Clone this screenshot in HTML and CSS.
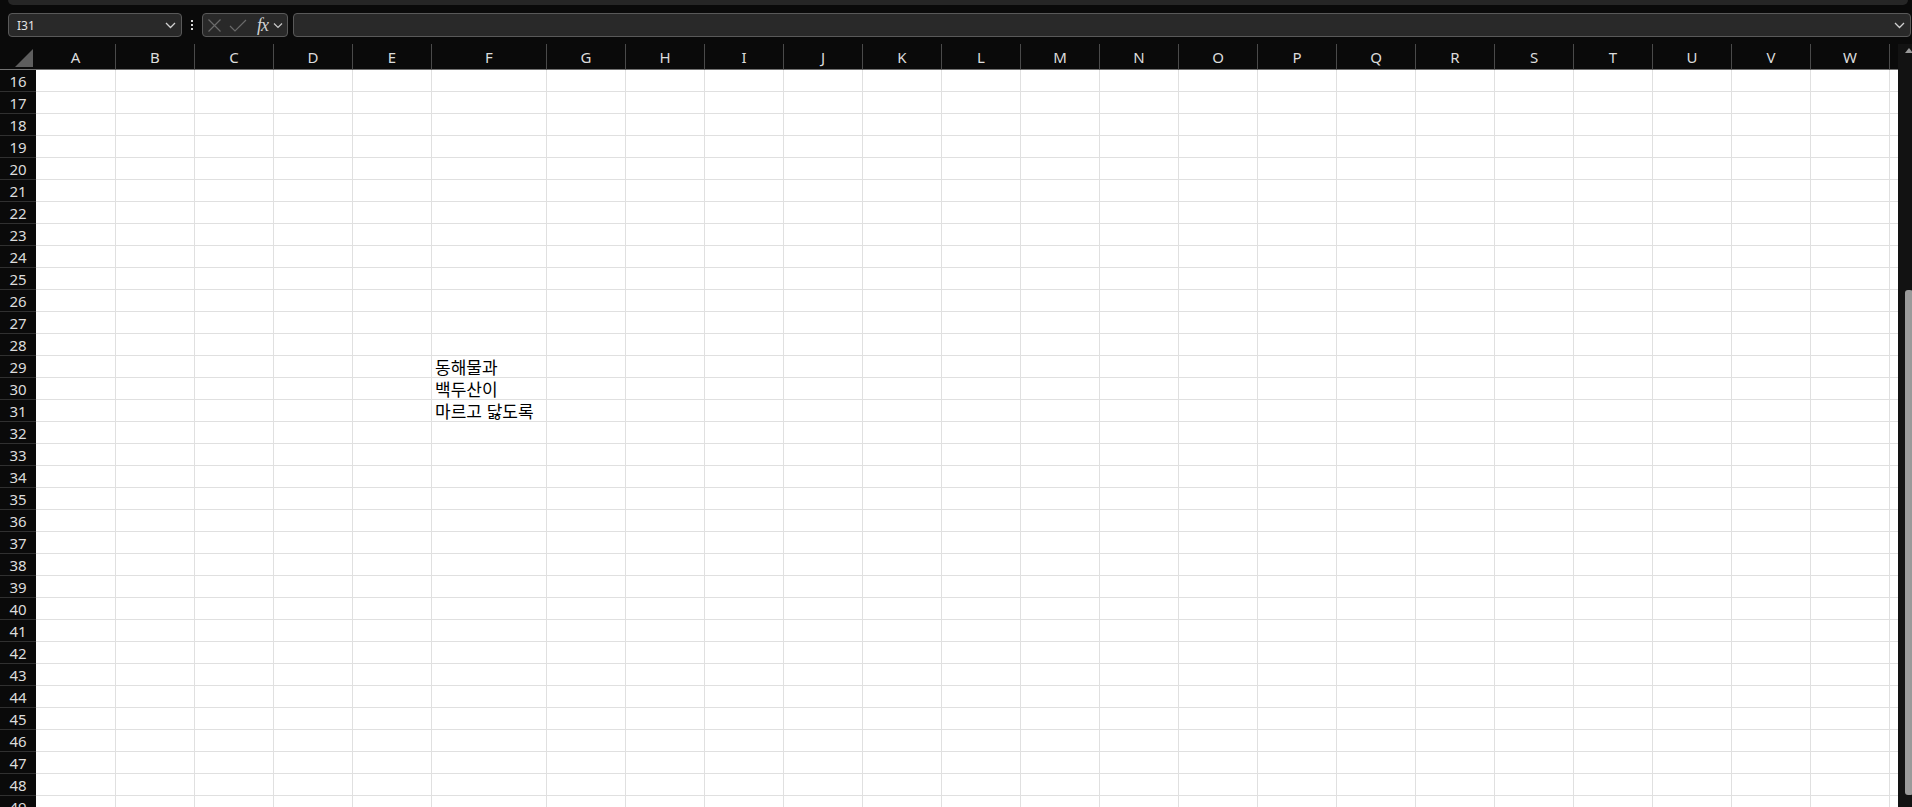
FILE: index.html
```html
<!DOCTYPE html>
<html lang="ko">
<head>
    <meta charset="UTF-8">
    <title>Excel - Sheet1</title>
    <link rel="stylesheet" href="styles.css">
</head>
<body>

    <div class="ribbon-edge"></div>

    <div class="toolbar">
        <div class="name-box">
            <span>I31</span>
            <svg class="chev" width="11" height="7" viewBox="0 0 11 7"><path d="M1 1 L5.5 5.5 L10 1" fill="none" stroke="#d0d0d0" stroke-width="1.3"/></svg>
        </div>
        <div class="dots"><i></i><i></i><i></i></div>
        <div class="fx-box">
            <svg width="15" height="15" viewBox="0 0 15 15"><path d="M1.5 1.5 L13.5 13.5 M13.5 1.5 L1.5 13.5" stroke="#6a6a6a" stroke-width="1.2"/></svg>
            <svg width="18" height="15" viewBox="0 0 18 15"><path d="M1 8 L6 13 L17 2" fill="none" stroke="#6a6a6a" stroke-width="1.2"/></svg>
            <span class="fx">fx</span>
            <svg class="chev fx-chev" width="10" height="7" viewBox="0 0 10 7"><path d="M1 1.5 L5 5.5 L9 1.5" fill="none" stroke="#c8c8c8" stroke-width="1.2"/></svg>
        </div>
        <div class="formula-bar">
            <svg class="chev" width="11" height="7" viewBox="0 0 11 7"><path d="M1 1 L5.5 5.5 L10 1" fill="none" stroke="#d0d0d0" stroke-width="1.3"/></svg>
        </div>
    </div>

    <main class="workspace">
        <div class="sheet" id="sheet"></div>
        <div class="vscroll">
            <div class="arrow-up"></div>
            <div class="thumb"></div>
        </div>
    </main>

    <script>
        // last column (X) is only partly visible, its letter falls off screen
        const cols = ['A','B','C','D','E','F','G','H','I','J','K','L','M','N','O','P','Q','R','S','T','U','V','W',''];
        const values = { 'F29': '동해물과', 'F30': '백두산이', 'F31': '마르고 닳도록' };
        const sheet = document.getElementById('sheet');

        let html = '<div class="corner"><span class="tri"></span></div>';
        cols.forEach(c => { html += `<div class="col-head">${c}</div>`; });

        for (let r = 16; r <= 49; r++) {
            html += `<div class="row-head">${r}</div>`;
            cols.forEach(c => {
                let v = values[c + r] || '';
                html += `<div class="cell">${v}</div>`;
            });
        }
        sheet.innerHTML = html;
    </script>

</body>
</html>
```

FILE: styles.css
```css
body {
    margin: 0;
    height: 100vh;
    overflow: hidden;
    background-color: #0a0a0a;
    font-family: "Noto Sans", "Noto Sans CJK KR", sans-serif;
    display: flex;
    flex-direction: column;
}

.ribbon-edge {
    height: 5px;
    margin: 0 4px 0 8px;
    background-color: #262626;
    border-radius: 0 0 6px 6px;
}

.toolbar {
    height: 39px;
    box-sizing: border-box;
    padding: 8px 1px 0 8px;
    display: flex;
    align-items: flex-start;
}

.name-box,
.fx-box,
.formula-bar {
    height: 24px;
    box-sizing: border-box;
    background-color: #292929;
    border: 1px solid #595959;
    border-radius: 4px;
    display: flex;
    align-items: center;
}

.name-box {
    width: 174px;
    padding: 0 5px 0 8px;
    justify-content: space-between;
    color: #e4e4e4;
    font-size: 12px;
}

.dots {
    width: 2px;
    margin: 7px 9px 0 9px;
    display: flex;
    flex-direction: column;
    gap: 2px;
}

.dots i {
    width: 2px;
    height: 2px;
    background-color: #d8d8d8;
}

.fx-box {
    width: 86px;
    padding: 0 2px 0 4px;
    gap: 7px;
}

.fx {
    font-family: "Liberation Serif", serif;
    font-style: italic;
    font-size: 18px;
    color: #d2d2d2;
    margin-left: 3px;
    letter-spacing: -1px;
    line-height: 20px;
}

.fx-chev {
    margin-left: -2px;
}

.formula-bar {
    flex: 1;
    margin-left: 5px;
    justify-content: flex-end;
    padding-right: 5px;
}

.workspace {
    flex: 1;
    display: flex;
    overflow: hidden;
}

.sheet {
    flex: 1;
    overflow: hidden;
    display: grid;
    grid-template-columns: 36px 80px repeat(4, 79px) 115px repeat(18, 79px);
    grid-template-rows: 26px;
    grid-auto-rows: 22px;
    align-content: start;
    background-color: #ffffff;
}

.corner,
.col-head {
    background-color: #0a0a0a;
    border-bottom: 1px solid #727272;
    box-sizing: border-box;
}

.corner {
    position: relative;
}

.tri {
    position: absolute;
    right: 3px;
    bottom: 2px;
    width: 0;
    height: 0;
    border-left: 18px solid transparent;
    border-bottom: 18px solid #5e5e5e;
}

.col-head {
    border-right: 1px solid #4a4a4a;
    color: #dcdcdc;
    font-size: 15px;
    display: flex;
    align-items: center;
    justify-content: center;
    padding-top: 1px;
}

.row-head {
    background-color: #0a0a0a;
    border-bottom: 1px solid #303030;
    box-sizing: border-box;
    color: #dcdcdc;
    font-size: 15px;
    display: flex;
    align-items: center;
    justify-content: center;
}

.cell {
    border-right: 1px solid #e0e0e0;
    border-bottom: 1px solid #e0e0e0;
    box-sizing: border-box;
    padding: 0 0 0 3px;
    display: flex;
    align-items: flex-end;
    white-space: nowrap;
    font-family: "Noto Sans CJK KR", sans-serif;
    font-size: 17px;
    line-height: 21px;
    color: #000000;
}

.vscroll {
    width: 14px;
    background-color: #121212;
    position: relative;
}

.arrow-up {
    position: absolute;
    top: 4px;
    left: 7px;
    width: 0;
    height: 0;
    border-left: 4px solid transparent;
    border-right: 4px solid transparent;
    border-bottom: 5px solid #9a9a9a;
}

.thumb {
    position: absolute;
    top: 246px;
    left: 7px;
    width: 8px;
    height: 505px;
    background-color: #9a9a9a;
    border-radius: 3px;
}
```
